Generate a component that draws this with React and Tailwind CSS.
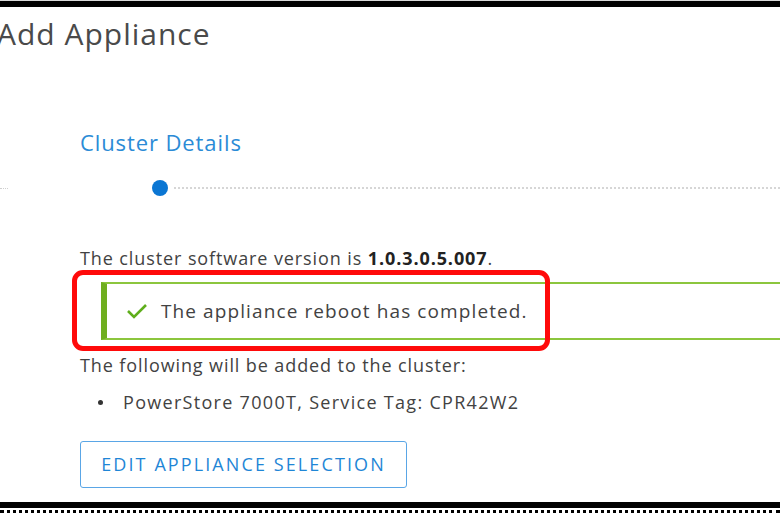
import React from "react";

export default function App() {
  return (
    <div
      className="w-[780px] h-[518px] bg-white overflow-hidden flex flex-col text-[#424242]"
      style={{ fontFamily: "'Open Sans', Lato, sans-serif" }}
    >
      <div className="h-px bg-[#d8d8d8]" />
      <div className="h-[6px] bg-black" />

      <h1 className="mt-[10px] ml-[-3px] text-[30px] leading-[34px] tracking-[1px] text-[#4a4a4a] font-normal">
        Add Appliance
      </h1>

      <div className="pl-[80px] pt-[77px]">
        <h2 className="text-[22px] leading-[28px] tracking-[0.9px] text-[#2b8bd6]">Cluster Details</h2>
      </div>

      <div className="mt-[24px] flex items-center h-[16px]">
        <div className="w-[8px] border-t border-dotted border-[#cfcfcf]" />
        <div className="w-[144px]" />
        <div className="w-[16px] h-[16px] rounded-full bg-[#0b76d3]" />
        <div className="ml-[6px] flex-1 border-t-2 border-dotted border-[#d6d6d6]" />
      </div>

      <div className="pl-[80px] mt-[51px]">
        <p className="text-[18px] leading-[22px] tracking-[0.9px]">
          The cluster software version is <span className="font-bold text-[#222]">1.0.3.0.5.007</span>.
        </p>
      </div>

      <div className="mt-[1px] ml-[72px] relative">
        <div className="absolute left-0 top-0 w-[478px] h-[81px] border-[5px] border-[#ff0a0a] rounded-[11px] z-10" />
        <div className="pt-[12px] pl-[29px]">
          <div className="h-[58px] border-y-2 border-[#8cc63e] border-l-[6px] border-l-[#6fae1f] flex items-center pl-[19px]">
            <svg width="22" height="18" viewBox="0 0 22 18" className="mr-[13px]">
              <polyline points="2,9 8,15 20,3" fill="none" stroke="#5fae1c" strokeWidth="2.6" />
            </svg>
            <span className="text-[19px] tracking-[1.1px] text-[#424242]">The appliance reboot has completed.</span>
          </div>
        </div>
      </div>

      <div className="pl-[80px] mt-[14px]">
        <p className="text-[18px] leading-[22px] tracking-[0.9px]">The following will be added to the cluster:</p>
        <ul className="mt-[15px] pl-[18px] flex items-center text-[18px] leading-[22px] tracking-[1.3px]">
          <li className="flex items-center">
            <span className="w-[5px] h-[5px] rounded-full bg-[#333] mr-[20px]" />
            PowerStore 7000T, Service Tag: CPR42W2
          </li>
        </ul>
        <button
          type="button"
          className="mt-[28px] w-[327px] h-[47px] border border-[#5aa6e6] rounded-[3px] text-[#1f86d6] text-[18px] tracking-[2.1px] bg-white"
        >
          EDIT APPLIANCE SELECTION
        </button>
      </div>

      <div className="mt-[14px] h-[6px] bg-black" />
      <div className="mt-[2px] h-[3px] border-t-[3px] border-dotted border-black" />
    </div>
  );
}
